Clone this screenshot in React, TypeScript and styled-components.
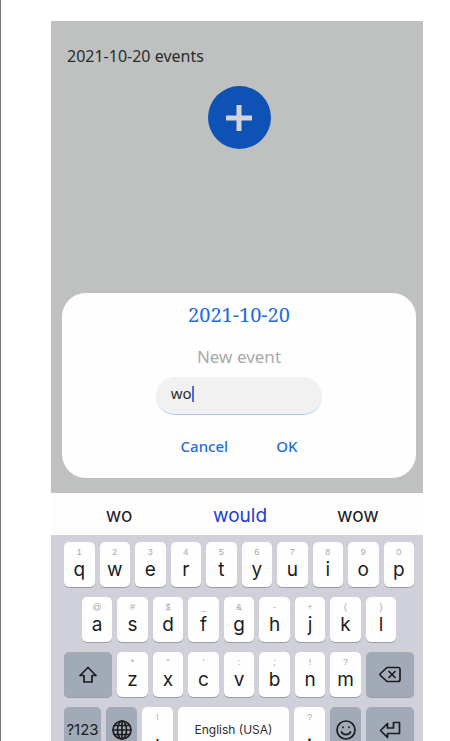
import React, { useState } from "react";
import styled, { createGlobalStyle, css } from "styled-components";

const GlobalStyle = createGlobalStyle`
  *, *::before, *::after { box-sizing: border-box; }
  body { margin: 0; background: #fff; }
  button, input { font: inherit; color: inherit; border: 0; padding: 0; margin: 0; }
`;

const ui = `"Noto Sans", "Open Sans", sans-serif`;
const keys = `Inter, "Liberation Sans", sans-serif`;

const Page = styled.div`
  height: 100vh;
  overflow: hidden;
  border-left: 1px solid #77777a;
  padding: 21px 27px 0 50px;
`;

const Phone = styled.div`
  display: flex;
  flex-direction: column;
  font-family: ${ui};
`;

const EventScreen = styled.main`
  display: flex;
  flex-direction: column;
  background: #bfc1c0;
  padding: 23px 7px 15px 11px;
`;

const ScreenTitle = styled.h1`
  margin: 0 0 18px 5px;
  font-size: 16px;
  line-height: 24px;
  font-weight: 400;
  color: #2a2c2c;
`;

const AddButton = styled.button`
  display: grid;
  place-items: center;
  align-self: center;
  width: 63px;
  height: 63px;
  border-radius: 50%;
  background: #0f52b5;
  color: #d2d4da;
`;

const Dialog = styled.form`
  display: flex;
  flex-direction: column;
  align-items: center;
  margin-top: 144px;
  padding: 9px 0 20px;
  border-radius: 24px;
  background: #fefefe;
`;

const DialogTitle = styled.h2`
  margin: 0;
  font-family: "Noto Serif", "Liberation Serif", serif;
  font-size: 20px;
  line-height: 26px;
  font-weight: 400;
  color: #1f6de0;
`;

const FieldLabel = styled.label`
  margin-top: 17px;
  font-size: 17px;
  line-height: 24px;
  color: #a9a9a9;
`;

const Field = styled.div`
  position: relative;
  width: 47%;
  margin-top: 8px;
`;

const FieldInput = styled.input`
  display: block;
  width: 100%;
  height: 38px;
  border-radius: 19px;
  padding: 0 15px 5px;
  outline: 0;
  background: #f1f1f1;
  border-bottom: 1px solid #a9c8f2;
  font-size: 15px;
  color: #2c2c2c;
`;

const Caret = styled.span`
  position: absolute;
  left: 36px;
  top: 9px;
  width: 2px;
  height: 16px;
  background: #5468d8;
`;

const Actions = styled.div`
  display: flex;
  gap: 48px;
  margin-top: 19px;
`;

const ActionButton = styled.button`
  background: none;
  font-size: 15px;
  line-height: 24px;
  font-weight: 500;
  color: #1f6de0;
`;

const Keyboard = styled.section`
  font-family: ${keys};
  background: #cfd0da;
`;

const Suggestions = styled.div`
  display: grid;
  grid-template-columns: 136px 1fr 130px;
  height: 42px;
  background: #fdfdfd;
`;

const Suggestion = styled.button<{ $primary?: boolean }>`
  background: none;
  padding-top: 3px;
  font-size: 19px;
  line-height: 24px;
  color: ${(p) => (p.$primary ? "#2440cf" : "#1c1c1e")};
`;

const Rows = styled.div`
  display: grid;
  gap: 10px;
  padding: 7px 9px 7px 13px;
`;

const LetterRow = styled.div`
  display: grid;
  grid-template-columns: repeat(20, 1fr);
  column-gap: 5px;
`;

const BottomRow = styled.div`
  display: grid;
  grid-template-columns: 37px 31px 31px 1fr 31px 31px 48px;
  column-gap: 5px;
`;

const keyBase = css`
  height: 45px;
  border-radius: 5px;
  box-shadow: 0 1px 0 #9b9da6;
`;

const Key = styled.button<{ $start?: number }>`
  ${keyBase}
  display: flex;
  flex-direction: column;
  align-items: center;
  grid-column: ${(p) => (p.$start ? `${p.$start} / span 2` : "auto")};
  padding-top: 4px;
  background: #fefefe;
  color: #1c1c1e;
  font-size: 19px;
  line-height: 24px;
`;

const Hint = styled.small`
  font-family: "Liberation Sans", sans-serif;
  font-size: 9px;
  line-height: 12px;
  color: #a6a6ac;
`;

const ActionKey = styled.button<{ $span?: number }>`
  ${keyBase}
  display: grid;
  place-items: center;
  grid-column: ${(p) => (p.$span ? `span ${p.$span}` : "auto")};
  background: #a3aab7;
  color: #1c1c1e;
  font-size: 15px;
`;

const SpaceKey = styled.button`
  ${keyBase}
  background: #fefefe;
  font-size: 12px;
  color: #2c2c2e;
`;

const Icon = styled.svg`
  display: block;
  fill: none;
  stroke: currentColor;
  stroke-width: 1.7;
  stroke-linejoin: round;
  stroke-linecap: round;
`;

const PlusIcon = styled(Icon)`
  stroke-width: 5;
  stroke-linecap: butt;
`;

const topRow = ["q1", "w2", "e3", "r4", "t5", "y6", "u7", "i8", "o9", "p0"];
const homeRow = ["a@", "s#", "d$", "f_", "g&", "h-", "j+", "k(", "l)"];
const lowRow = ["z*", 'x"', "c'", "v:", "b;", "n!", "m?"];

function LetterKey({ pair, start }: { pair: string; start?: number }) {
  return (
    <Key type="button" $start={start}>
      <Hint>{pair[1]}</Hint>
      {pair[0]}
    </Key>
  );
}

export default function App() {
  const [text, setText] = useState("wo");
  return (
    <>
      <GlobalStyle />
      <Page>
        <Phone>
          <EventScreen>
            <ScreenTitle>2021-10-20 events</ScreenTitle>
            <AddButton type="button" aria-label="Add event">
              <PlusIcon width="26" height="26" viewBox="0 0 26 26">
                <path d="M13 0v26M0 13h26" />
              </PlusIcon>
            </AddButton>
            <Dialog onSubmit={(e) => e.preventDefault()}>
              <DialogTitle>2021-10-20</DialogTitle>
              <FieldLabel htmlFor="event">New event</FieldLabel>
              <Field>
                <FieldInput id="event" autoComplete="off" value={text} onChange={(e) => setText(e.target.value)} />
                <Caret />
              </Field>
              <Actions>
                <ActionButton type="button">Cancel</ActionButton>
                <ActionButton type="submit">OK</ActionButton>
              </Actions>
            </Dialog>
          </EventScreen>
          <Keyboard aria-label="Keyboard">
            <Suggestions>
              <Suggestion type="button">wo</Suggestion>
              <Suggestion type="button" $primary>would</Suggestion>
              <Suggestion type="button">wow</Suggestion>
            </Suggestions>
            <Rows>
              <LetterRow>
                {topRow.map((k, i) => <LetterKey key={k} pair={k} start={1 + i * 2} />)}
              </LetterRow>
              <LetterRow>
                {homeRow.map((k, i) => <LetterKey key={k} pair={k} start={2 + i * 2} />)}
              </LetterRow>
              <LetterRow>
                <ActionKey type="button" aria-label="Shift" $span={3}>
                  <Icon width="20" height="18" viewBox="0 0 20 18">
                    <path d="M10 1.5 18 9.5h-4v6.5H6V9.5H2Z" />
                  </Icon>
                </ActionKey>
                {lowRow.map((k, i) => <LetterKey key={k} pair={k} start={4 + i * 2} />)}
                <ActionKey type="button" aria-label="Backspace" $span={3}>
                  <Icon width="22" height="17" viewBox="0 0 22 17">
                    <path d="M8 1.5h11a2 2 0 0 1 2 2v10a2 2 0 0 1-2 2H8L1.5 9.5a1.5 1.5 0 0 1 0-2ZM10 5.5l6 6M16 5.5l-6 6" />
                  </Icon>
                </ActionKey>
              </LetterRow>
              <BottomRow>
                <ActionKey type="button">?123</ActionKey>
                <ActionKey type="button" aria-label="Language">
                  <Icon width="20" height="20" viewBox="0 0 20 20">
                    <circle cx="10" cy="10" r="9" />
                    <ellipse cx="10" cy="10" rx="4.5" ry="9" />
                    <path d="M10 1v18M1 10h18M2.5 5.5h15M2.5 14.5h15" />
                  </Icon>
                </ActionKey>
                <LetterKey pair=",!" />
                <SpaceKey type="button">English (USA)</SpaceKey>
                <LetterKey pair=".?" />
                <ActionKey type="button" aria-label="Emoji">
                  <Icon width="20" height="20" viewBox="0 0 20 20">
                    <circle cx="10" cy="10" r="9" />
                    <path d="M5.5 12c2 3.5 7 3.5 9 0M7 7v.5M13 7v.5" />
                  </Icon>
                </ActionKey>
                <ActionKey type="button" aria-label="Enter">
                  <Icon width="22" height="18" viewBox="0 0 22 18">
                    <path d="M1.5 9.5 8.500 2.500v4.500h6V1.5h6v11h-12V16.500Z" />
                  </Icon>
                </ActionKey>
              </BottomRow>
            </Rows>
          </Keyboard>
        </Phone>
      </Page>
    </>
  );
}
